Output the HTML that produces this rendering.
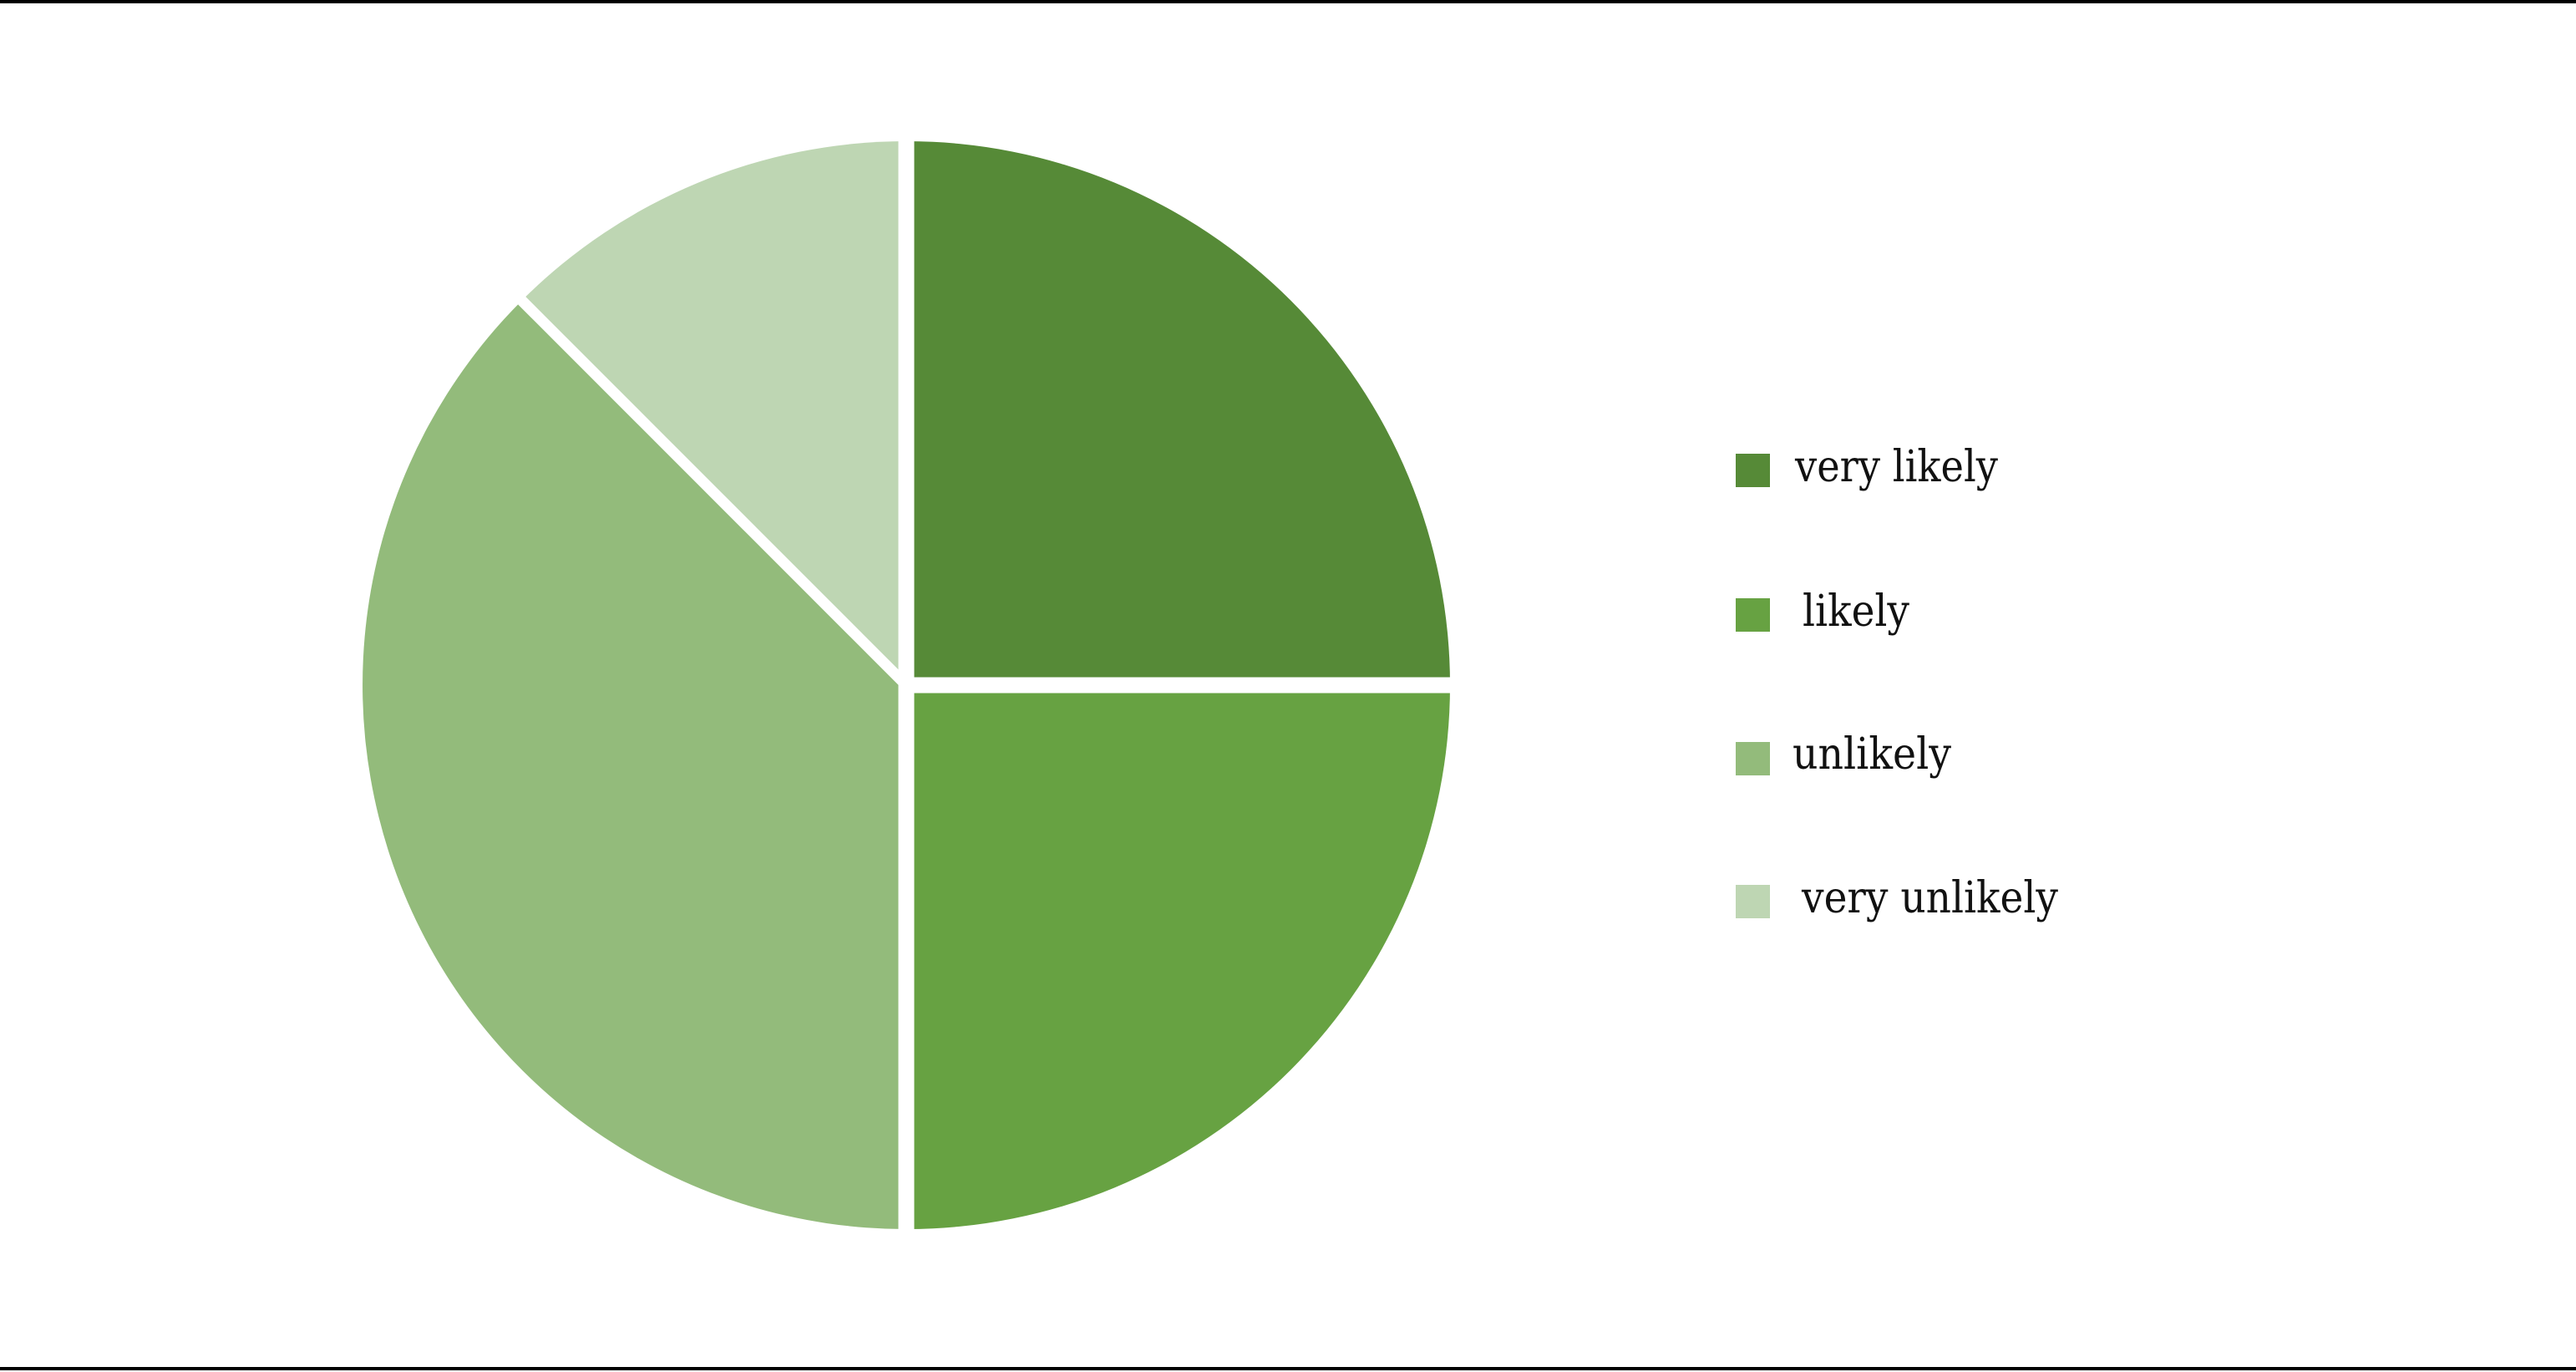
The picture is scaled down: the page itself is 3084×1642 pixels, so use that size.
<!DOCTYPE html>
<html><head><meta charset="utf-8"><style>
html,body{margin:0;padding:0;background:#fff;}
svg{display:block;}
</style></head><body>
<svg width="3084" height="1642" viewBox="0 0 3084 1642" xmlns="http://www.w3.org/2000/svg">
<rect x="0" y="0" width="3084" height="1642" fill="#fff"/>
<rect x="0" y="0" width="3084" height="4" fill="#000"/>
<rect x="0" y="1636" width="3084" height="4" fill="#000"/>
<g transform="translate(1085,820)">
<path d="M0,0 L0,-651 A651,651 0 0 1 651,0 Z" fill="#568a37"/>
<path d="M0,0 L651,0 A651,651 0 0 1 0,651 Z" fill="#67a242"/>
<path d="M0,0 L0,651 A651,651 0 0 1 -460.3,-460.3 Z" fill="#93bb7b"/>
<path d="M0,0 L-460.3,-460.3 A651,651 0 0 1 0,-651 Z" fill="#bed6b3"/>
<line x1="0" y1="-700" x2="0" y2="700" stroke="#fff" stroke-width="19"/>
<line x1="0" y1="0" x2="700" y2="0" stroke="#fff" stroke-width="19"/>
<line x1="0" y1="0" x2="-500" y2="-500" stroke="#fff" stroke-width="13"/>
</g>
<g font-family="'DejaVu Serif', 'Liberation Serif', serif" font-size="52" fill="#111">
<rect x="2078" y="543" width="41" height="40" fill="#568a37"/>
<text x="2149" y="576" textLength="243" lengthAdjust="spacingAndGlyphs">very likely</text>
<rect x="2078" y="716" width="41" height="40" fill="#67a242"/>
<text x="2158" y="749" textLength="128" lengthAdjust="spacingAndGlyphs">likely</text>
<rect x="2078" y="888" width="41" height="40" fill="#93bb7b"/>
<text x="2146" y="920" textLength="190" lengthAdjust="spacingAndGlyphs">unlikely</text>
<rect x="2078" y="1059" width="41" height="40" fill="#bed6b3"/>
<text x="2157" y="1092" textLength="307" lengthAdjust="spacingAndGlyphs">very unlikely</text>
</g>
</svg>
</body></html>
